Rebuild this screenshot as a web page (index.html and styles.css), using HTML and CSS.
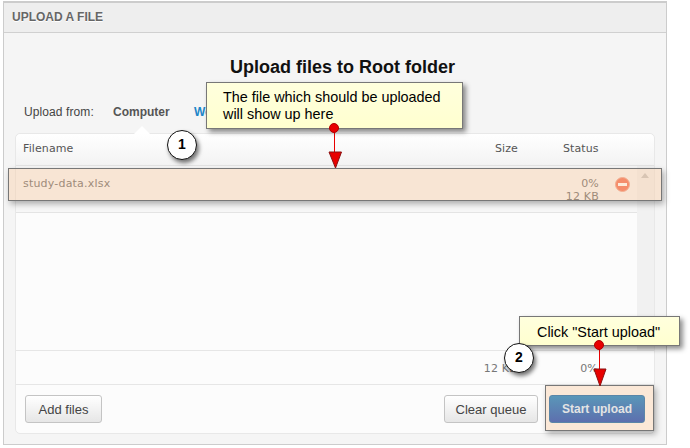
FILE: index.html
```html
<!DOCTYPE html>
<html lang="en">
<head>
<meta charset="utf-8">
<title>Upload a file</title>
<link rel="stylesheet" href="styles.css">
</head>
<body>
<div class="stage">
  <section class="panel">
    <header class="panel-head">UPLOAD A FILE</header>
    <div class="panel-body">
      <h1 class="title">Upload files to Root folder</h1>
      <div class="tabs">
        <span class="tabs-label">Upload from:</span>
        <span class="tab tab-active">Computer</span>
        <span class="tab tab-link">Web</span>
      </div>
      <div class="uploader">
        <div class="list-head">
          <span class="col-name">Filename</span>
          <span class="col-size">Size</span>
          <span class="col-status">Status</span>
        </div>
        <div class="list-wrap">
          <div class="list">
            <div class="file-row">
              <span class="file-name">study-data.xlsx</span>
              <span class="file-status">0%<br>12 KB</span>
              <svg class="remove" width="15" height="15" viewBox="0 0 15 15"><circle cx="7.500" cy="7.500" r="7" fill="#f26a4e" stroke="#eda08c"/><rect x="3" y="6" width="9" height="3" fill="#fff"/></svg>
            </div>
          </div>
          <div class="scroll"><i class="scroll-up"></i></div>
        </div>
        <div class="totals">
          <span class="total-size">12 KB</span>
          <span class="total-pct">0%</span>
        </div>
        <div class="actions">
          <button class="btn">Add files</button>
          <span class="spacer"></span>
          <button class="btn btn-clear">Clear queue</button>
          <button class="btn btn-primary">Start upload</button>
        </div>
      </div>
    </div>
  </section>

  <div class="hilite hilite-row"></div>
  <div class="hilite hilite-btn"></div>

  <svg class="arrows" width="690" height="448" viewBox="0 0 690 448">
    <g fill="#e80000" stroke="#8a1010" stroke-width="1">
      <path d="M334.500 128V152" stroke="#e80000" fill="none"/>
      <path d="M329 152H341.500L335.500 168Z"/>
      <path d="M599.500 346V370" stroke="#e80000" fill="none"/>
      <path d="M594 369H606L600 386Z"/>
    </g>
  </svg>

  <div class="note note-one">The file which should be uploaded<br>will show up here</div>
  <div class="note note-two">Click "Start upload"</div>
  <svg class="dots" width="690" height="448" viewBox="0 0 690 448">
    <circle cx="334" cy="128" r="4.500" fill="#e80000" stroke="#b00000"/>
    <circle cx="599" cy="345" r="4.500" fill="#e80000" stroke="#b00000"/>
  </svg>
  <div class="badge badge-one">1</div>
  <div class="badge badge-two">2</div>
</div>
</body>
</html>
```
FILE: styles.css
```css
* { box-sizing: border-box; }
html, body { margin: 0; padding: 0; background: #fff; }
body { font-family: "Liberation Sans", Arial, sans-serif; color: #333; }
.stage { position: relative; width: 690px; height: 448px; overflow: hidden; padding: 1px 0 0 3px; }

.panel { width: 664px; height: 444px; border: 1px solid #ccc; border-top-width: 2px; display: flex; flex-direction: column; background: #f5f5f5; }
.panel-head { height: 30px; flex: none; background: #eee; border-bottom: 1px solid #d0d0d0; font-size: 12px; font-weight: bold; color: #666; line-height: 29px; padding-left: 8px; text-shadow: 0 1px 0 #fff; }
.panel-body { flex: 1; padding: 0 11px 10px; display: flex; flex-direction: column; }
.title { margin: 24px 0 0; padding-left: 15px; height: 21px; font-size: 18px; line-height: 21px; font-weight: bold; color: #111; text-align: center; }
.tabs { height: 38px; margin-top: 17px; flex: none; display: flex; align-items: flex-start; padding: 10px 0 0 9px; font-size: 12px; line-height: 15px; }
.tabs-label { color: #444; width: 89px; letter-spacing: .1px; }
.tab { font-weight: bold; color: #555; }
.tab-active { width: 81px; }
.tab-link { color: #1d86c8; }

.uploader { position: relative; flex: 1; background: #fcfcfc; border: 1px solid #e8e8e8; border-radius: 5px; display: flex; flex-direction: column; }
.uploader::before { content: ""; position: absolute; left: 118px; top: -8px; border: 8px solid transparent; border-top-width: 0; border-bottom-color: #fff; }
.list-head { height: 32px; flex: none; display: flex; align-items: center; font: 11px "DejaVu Sans", sans-serif; letter-spacing: .1px; color: #555; padding: 0 0 3px 7px; background: linear-gradient(#fff, #f3f3f3); border-bottom: 1px solid #e4e4e4; border-radius: 5px 5px 0 0; }
.col-name { width: 472px; }
.col-size { width: 68px; }
.list-wrap { height: 184px; flex: none; display: flex; }
.list { flex: 1; }
.file-row { position: relative; height: 47px; border-bottom: 1px solid #e4e4e4; font: 11px "DejaVu Sans", sans-serif; letter-spacing: .2px; color: #666; background: #f7f7f7; display: flex; padding-left: 7px; }
.file-name { padding-top: 11px; }
.file-status { position: absolute; right: 38px; top: 11px; text-align: right; line-height: 13px; }
.remove { position: absolute; right: 7px; top: 11px; }
.scroll { width: 17px; flex: none; background: #f1f1f1; position: relative; }
.scroll-up { position: absolute; left: 4px; top: 7px; border: 4px solid transparent; border-top-width: 0; border-bottom: 5px solid #c3c3c3; }
.totals { height: 35px; flex: none; position: relative; border-top: 1px solid #e6e6e6; border-bottom: 1px solid #e6e6e6; font: 11px "DejaVu Sans", sans-serif; letter-spacing: .2px; color: #777; }
.total-size { position: absolute; right: 137px; top: 11px; }
.total-pct { position: absolute; right: 56px; top: 11px; }
.actions { flex: 1; display: flex; align-items: flex-start; gap: 11px; padding: 10px 9px 0 9px; }
.spacer { flex: 1; }
.btn { height: 28px; padding: 0; width: 77px; font: 13px "Liberation Sans", Arial, sans-serif; color: #444; border: 1px solid #c4c4c4; border-radius: 3px; background: linear-gradient(#fff, #e6e6e6); }
.btn-clear { width: 94px; }
.btn-primary { position: relative; z-index: 1; width: 96px; color: #e4e4e4; font-weight: bold; font-size: 12px; border-color: #5b86a8; background: linear-gradient(#5a96b8, #5d6fae); }

.hilite { position: absolute; background: rgba(250, 200, 155, .38); border: 1px solid #777; box-shadow: 2px 3px 6px rgba(0,0,0,.3); }
.hilite-row { left: 8px; top: 168px; width: 654px; height: 33px; }
.hilite-btn { left: 545px; top: 385px; width: 109px; height: 46px; }

.arrows, .dots { position: absolute; left: 0; top: 0; }

.note { position: absolute; background: linear-gradient(#ffffdd, #ffffcf); border: 1px solid #777; box-shadow: 3px 3px 5px rgba(0,0,0,.45); font-size: 14.4px; line-height: 17px; color: #000; }
.note-one { left: 206px; top: 82px; width: 257px; height: 47px; padding: 6px 0 0 16px; }
.note-two { left: 519px; top: 316px; width: 161px; height: 30px; padding: 7px 0 0 17px; white-space: nowrap; }

.badge { position: absolute; width: 30px; height: 30px; border-radius: 50%; background: #fff; border: 1.5px solid #111; box-shadow: 2px 3px 4px rgba(0,0,0,.55); font-size: 14px; font-weight: bold; color: #000; text-align: center; line-height: 27px; }
.badge-one { left: 167px; top: 130px; }
.badge-two { left: 504px; top: 343px; }
```
